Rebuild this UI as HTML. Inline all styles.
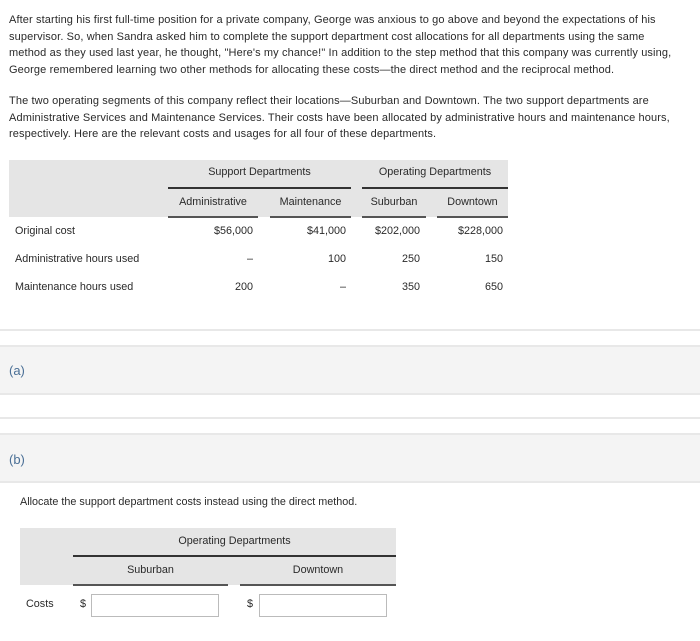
<!DOCTYPE html>
<html><head><style>
body{margin:0;width:700px;height:641px;background:#fff;font-family:"Liberation Sans",sans-serif;color:#2a2a2a;font-size:10.8px;position:relative;overflow:hidden}
.a{position:absolute;white-space:nowrap}
p{position:absolute;left:9px;margin:0;white-space:nowrap;line-height:16.7px;font-size:11px;letter-spacing:0.12px}
.bg{position:absolute;background:#e5e5e5}
.ln{position:absolute;height:1.5px;background:#333}
.r{text-align:right}
.c{text-align:center}
.hr{position:absolute;left:0;width:700px;height:2px;background:#e8e8e8}
.band{position:absolute;left:0;width:700px;background:#f4f4f4}
.lab{position:absolute;left:9px;color:#4a6f96;font-size:13px}
.in{position:absolute;border:1px solid #bbb;background:#fff;height:21px}
</style></head><body>
<p style="top:12px">After starting his first full-time position for a private company, George was anxious to go above and beyond the expectations of his<br>supervisor. So, when Sandra asked him to complete the support department cost allocations for all departments using the same<br>method as they used last year, he thought, "Here's my chance!" In addition to the step method that this company was currently using,<br>George remembered learning two other methods for allocating these costs—the direct method and the reciprocal method.</p>
<p style="top:93px">The two operating segments of this company reflect their locations—Suburban and Downtown. The two support departments are<br>Administrative Services and Maintenance Services. Their costs have been allocated by administrative hours and maintenance hours,<br>respectively. Here are the relevant costs and usages for all four of these departments.</p>

<div class="bg" style="left:9px;top:160px;width:499px;height:57px"></div>
<div class="a c" style="left:168px;width:183px;top:166px">Support Departments</div>
<div class="a c" style="left:362px;width:146px;top:166px">Operating Departments</div>
<div class="ln" style="left:168px;width:183px;top:187px"></div>
<div class="ln" style="left:362px;width:146px;top:187px"></div>
<div class="a c" style="left:168px;width:90px;top:196px">Administrative</div>
<div class="a c" style="left:270px;width:81px;top:196px">Maintenance</div>
<div class="a c" style="left:362px;width:64px;top:196px">Suburban</div>
<div class="a c" style="left:437px;width:71px;top:196px">Downtown</div>
<div class="ln" style="left:168px;width:90px;top:216px;background:#555"></div>
<div class="ln" style="left:270px;width:81px;top:216px;background:#555"></div>
<div class="ln" style="left:362px;width:64px;top:216px;background:#555"></div>
<div class="ln" style="left:437px;width:71px;top:216px;background:#555"></div>

<div class="a" style="left:15px;top:225px">Original cost</div>
<div class="a r" style="left:168px;width:85px;top:225px">$56,000</div>
<div class="a r" style="left:270px;width:76px;top:225px">$41,000</div>
<div class="a r" style="left:362px;width:58px;top:225px">$202,000</div>
<div class="a r" style="left:437px;width:66px;top:225px">$228,000</div>
<div class="a" style="left:15px;top:253px">Administrative hours used</div>
<div class="a r" style="left:168px;width:85px;top:253px">–</div>
<div class="a r" style="left:270px;width:76px;top:253px">100</div>
<div class="a r" style="left:362px;width:58px;top:253px">250</div>
<div class="a r" style="left:437px;width:66px;top:253px">150</div>
<div class="a" style="left:15px;top:281px">Maintenance hours used</div>
<div class="a r" style="left:168px;width:85px;top:281px">200</div>
<div class="a r" style="left:270px;width:76px;top:281px">–</div>
<div class="a r" style="left:362px;width:58px;top:281px">350</div>
<div class="a r" style="left:437px;width:66px;top:281px">650</div>

<div class="hr" style="top:329px"></div>
<div class="band" style="top:347px;height:47px"></div>
<div class="hr" style="top:345px"></div>
<div class="hr" style="top:393px"></div>
<div class="lab" style="top:363px">(a)</div>
<div class="hr" style="top:417px"></div>
<div class="band" style="top:435px;height:47px"></div>
<div class="hr" style="top:433px"></div>
<div class="hr" style="top:481px"></div>
<div class="lab" style="top:452px">(b)</div>

<div class="a" style="left:20px;top:496px">Allocate the support department costs instead using the direct method.</div>
<div class="bg" style="left:20px;top:528px;width:376px;height:57px"></div>
<div class="a c" style="left:73px;width:323px;top:535px">Operating Departments</div>
<div class="ln" style="left:73px;width:323px;top:555px"></div>
<div class="a c" style="left:73px;width:155px;top:564px">Suburban</div>
<div class="a c" style="left:240px;width:156px;top:564px">Downtown</div>
<div class="ln" style="left:73px;width:155px;top:584px;background:#555"></div>
<div class="ln" style="left:240px;width:156px;top:584px;background:#555"></div>
<div class="a" style="left:26px;top:598px">Costs</div>
<div class="a" style="left:80px;top:598px">$</div>
<div class="in" style="left:91px;top:594px;width:126px"></div>
<div class="a" style="left:247px;top:598px">$</div>
<div class="in" style="left:259px;top:594px;width:126px"></div>
</body></html>
